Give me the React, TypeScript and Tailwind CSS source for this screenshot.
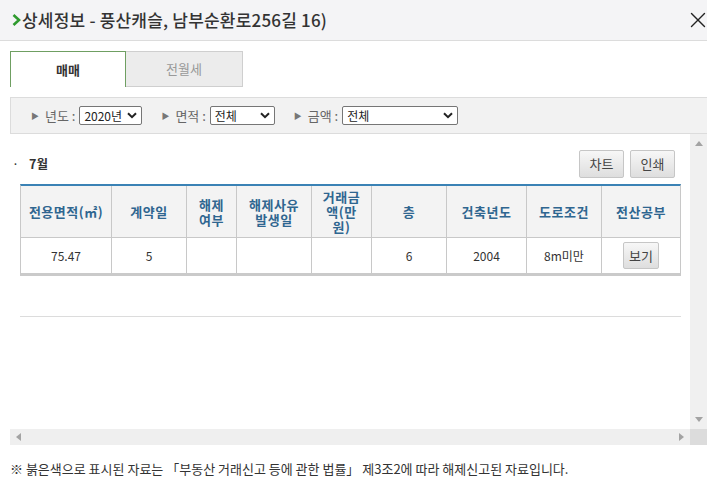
import { X } from "lucide-react";

const font = "font-['Noto_Sans_CJK_KR','Noto_Sans',sans-serif]";

const cols = [
  { label: "전용면적(㎡)", w: "w-[90px]", v: "75.47" },
  { label: "계약일", w: "w-[75px]", v: "5" },
  { label: "해제\n여부", w: "w-[50px]", v: "" },
  { label: "해제사유\n발생일", w: "w-[75px]", v: "" },
  { label: "거래금\n액(만\n원)", w: "w-[60px]", v: "" },
  { label: "층", w: "w-[75px]", v: "6" },
  { label: "건축년도", w: "w-[80px]", v: "2004" },
  { label: "도로조건", w: "w-[75px]", v: "8m미만" },
  { label: "전산공부", w: "flex-1", v: "btn" },
];

function Chevron() {
  return (
    <svg width="10" height="7" viewBox="0 0 10 7" className="shrink-0">
      <path d="M1 1.2 L5 5.2 L9 1.2" fill="none" stroke="#222" strokeWidth="2" />
    </svg>
  );
}

function Filter({ label, value, w }: { label: string; value: string; w: string }) {
  return (
    <div className="flex items-center">
      <span className="text-[8px] text-[#777] mr-[6px]">▶</span>
      <span className="text-[13px] text-[#666] whitespace-pre">{label} : </span>
      <div
        className={`${w} ml-[1px] h-[19px] border border-[#767676] rounded-[2px] bg-white flex items-center justify-between pl-[4px] pr-[4px] text-[12px] text-[#222]`}
      >
        <span>{value}</span>
        <Chevron />
      </div>
    </div>
  );
}

function Btn({ children, cls }: { children: string; cls: string }) {
  return (
    <div
      className={`${cls} flex items-center justify-center border border-[#c6c6c6] rounded-[2px] bg-gradient-to-b from-[#f7f7f7] to-[#dedede] text-[#444] text-[13px]`}
    >
      {children}
    </div>
  );
}

export default function App() {
  return (
    <div className={`w-[707px] h-[482px] bg-white overflow-hidden ${font}`}>
      {/* header */}
      <div className="h-[41px] bg-[#f4f4f6] border-b border-[#dcdcdc] flex items-center justify-between pl-[12px]">
        <div className="flex items-center text-[17px] font-medium text-[#333] tracking-[0.2px]">
          <svg width="9" height="12" viewBox="0 0 9 12" className="mr-[1px]">
            <path d="M1.5 1 L7 6 L1.5 11" fill="none" stroke="#2e9a2e" strokeWidth="2.6" />
          </svg>
          <span>상세정보 - 풍산캐슬, 남부순환로256길 16)</span>
        </div>
        <X className="w-[26px] h-[26px] text-[#222] -mr-[4px]" strokeWidth={1.3} />
      </div>

      {/* tabs */}
      <div className="flex pl-[10px] mt-[10px] h-[36px]">
        <div className="w-[116px] border border-b-0 border-[#6f9f62] bg-white flex items-center justify-center text-[13px] font-bold text-[#333]">
          매매
        </div>
        <div className="w-[117px] border border-l-0 border-[#cfcfcf] bg-[#ececec] flex items-center justify-center text-[13px] text-[#999]">
          전월세
        </div>
      </div>

      {/* filter bar */}
      <div className="ml-[10px] mt-[10px] h-[37px] bg-[#f2f2f2] border border-r-0 border-[#dcdcdc] flex items-center pl-[20px] gap-[19px]">
        <Filter label="년도" value="2020년" w="w-[63px]" />
        <Filter label="면적" value="전체" w="w-[65px]" />
        <Filter label="금액" value="전체" w="w-[116px]" />
      </div>

      {/* scroll area */}
      <div className="ml-[10px] h-[311px] flex flex-col">
        <div className="flex flex-1 min-h-0">
          <div className="flex-1 pl-[10px] pr-[9px] pt-[16px]">
            <div className="flex items-center justify-between pr-[6px]">
              <div className="flex items-center text-[12.5px] font-bold text-[#333] -ml-[8px]">
                <span className="mr-[10px] font-normal">·</span>7월
              </div>
              <div className="flex gap-[6px]">
                <Btn cls="w-[45px] h-[28px]">차트</Btn>
                <Btn cls="w-[45px] h-[28px]">인쇄</Btn>
              </div>
            </div>

            {/* table */}
            <div className="mt-[6px] border-t-[2px] border-[#3a82b5] border-b-[3px] border-b-[#cacaca] border-x border-x-[#c8c8c8]">
              <div className="flex h-[52px] bg-[#f3f3f3] border-b border-[#c8c8c8]">
                {cols.map((c, i) => (
                  <div
                    key={i}
                    className={`${c.w} flex items-center justify-center text-center whitespace-pre-line leading-[15px] text-[13px] font-bold tracking-[0.5px] text-[#2f6690] ${i > 0 ? "border-l border-[#c8c8c8]" : ""}`}
                  >
                    {c.label}
                  </div>
                ))}
              </div>
              <div className="flex h-[35px] bg-white">
                {cols.map((c, i) => (
                  <div
                    key={i}
                    className={`${c.w} flex items-center justify-center text-[12px] text-[#333] ${i > 0 ? "border-l border-[#c8c8c8]" : ""}`}
                  >
                    {c.v === "btn" ? <Btn cls="w-[36px] h-[27px] text-[12px]">보기</Btn> : c.v}
                  </div>
                ))}
              </div>
            </div>

            <div className="mt-[40px] border-t border-[#dcdcdc]" />
          </div>

          {/* vertical scrollbar */}
          <div className="w-[17px] bg-[#f0f0f0] flex flex-col items-center justify-between py-[7px]">
            <svg width="8" height="5" viewBox="0 0 8 5"><path d="M4 0 L8 5 L0 5Z" fill="#a3a3a3" /></svg>
            <svg width="8" height="5" viewBox="0 0 8 5"><path d="M0 0 L8 0 L4 5Z" fill="#a3a3a3" /></svg>
          </div>
        </div>

        {/* horizontal scrollbar */}
        <div className="h-[16px] flex">
          <div className="flex-1 bg-[#efefef] flex items-center justify-between px-[6px]">
            <svg width="5" height="8" viewBox="0 0 5 8"><path d="M5 0 L5 8 L0 4Z" fill="#a3a3a3" /></svg>
            <svg width="5" height="8" viewBox="0 0 5 8"><path d="M0 0 L5 4 L0 8Z" fill="#a3a3a3" /></svg>
          </div>
          <div className="w-[17px] bg-[#dcdcdc]" />
        </div>
      </div>

      {/* footnote */}
      <div className="mt-[14px] pl-[10px] text-[13px] text-[#333]">
        ※ 붉은색으로 표시된 자료는 「부동산 거래신고 등에 관한 법률」 제3조2에 따라 해제신고된 자료입니다.
      </div>
    </div>
  );
}
